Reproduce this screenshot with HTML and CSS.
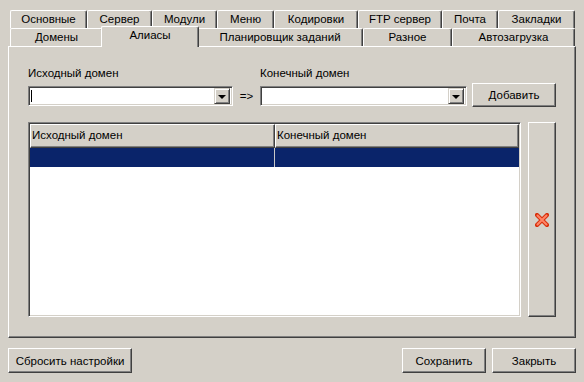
FILE: index.html
```html
<!DOCTYPE html>
<html lang="ru">
<head>
  <meta charset="UTF-8">
  <title>Настройки</title>
  <link rel="stylesheet" href="styles.css">
</head>
<body>
  <div class="window">
    <div class="tabs">
      <div class="tab-row back">
        <div class="tab">Основные</div>
        <div class="tab">Сервер</div>
        <div class="tab">Модули</div>
        <div class="tab">Меню</div>
        <div class="tab">Кодировки</div>
        <div class="tab">FTP сервер</div>
        <div class="tab">Почта</div>
        <div class="tab">Закладки</div>
      </div>
      <div class="tab-row front">
        <div class="tab">Домены</div>
        <div class="tab active">Алиасы</div>
        <div class="tab">Планировщик заданий</div>
        <div class="tab">Разное</div>
        <div class="tab">Автозагрузка</div>
      </div>
    </div>

    <div class="panel">
      <div class="domain-row">
        <div class="field source">
          <label>Исходный домен</label>
          <div class="combo">
            <span class="caret"></span>
            <span class="drop"><span class="arrow-down"></span></span>
          </div>
        </div>
        <span class="arrow">=&gt;</span>
        <div class="field target">
          <label>Конечный домен</label>
          <div class="combo">
            <span class="drop"><span class="arrow-down"></span></span>
          </div>
        </div>
        <button class="btn add">Добавить</button>
      </div>

      <div class="list-row">
        <div class="list">
          <div class="list-head">
            <div class="col">Исходный домен</div>
            <div class="col">Конечный домен</div>
          </div>
          <div class="list-item selected">
            <div class="cell"></div>
            <div class="cell"></div>
          </div>
        </div>
        <button class="btn delete" title="Удалить">
          <svg width="14" height="14" viewBox="0 0 14 14">
            <path d="M2 2 L12 12 M12 2 L2 12" stroke="#d8300c" stroke-width="4.2" stroke-linecap="round"/>
            <path d="M2.5 2.5 L11.5 11.5 M11.5 2.5 L2.5 11.5" stroke="#ff8466" stroke-width="2" stroke-linecap="round"/>
          </svg>
        </button>
      </div>
    </div>

    <div class="footer">
      <button class="btn reset">Сбросить настройки</button>
      <span class="spacer"></span>
      <button class="btn">Сохранить</button>
      <button class="btn">Закрыть</button>
    </div>
  </div>
</body>
</html>
```

FILE: styles.css
```css
body {
  margin: 0;
  background: #d4d0c8;
  font-family: 'Liberation Sans', Arial, sans-serif;
  font-size: 11.5px;
  color: #000;
}

.window {
  padding: 10px 8px 0 8px;
}

/* tabs */
.tab-row {
  display: grid;
  margin-left: 2px;
  width: 565px;
  height: 18px;
}
.tab-row.back {
  grid-template-columns: 77px 65px 65px 57px 84px 84px 56px 77px;
}
.tab-row.front {
  grid-template-columns: 93px 94px 166px 89px 123px;
}

.tab {
  border-top: 1px solid #fff;
  border-left: 1px solid #fff;
  border-right: 1px solid #404040;
  border-radius: 2px 2px 0 0;
  box-shadow: inset -1px 0 #808080;
  background: #d4d0c8;
  text-align: center;
  line-height: 17px;
  white-space: nowrap;
}
.tab.active {
  position: relative;
  z-index: 1;
  margin: -2px -2px -1px -2px;
  line-height: 16px;
}

/* main panel */
.panel {
  box-sizing: border-box;
  height: 292px;
  border: 1px solid;
  border-color: #fff #404040 #404040 #fff;
  box-shadow: inset -1px -1px #808080;
  padding: 20px 0 0 19px;
}

.domain-row {
  display: flex;
  align-items: flex-end;
}

.field label {
  display: block;
  line-height: 13px;
  margin-bottom: 6px;
}
.field.source .combo { width: 205px; }
.field.target .combo { width: 207px; }

.combo {
  box-sizing: border-box;
  height: 20px;
  background: #fff;
  border: 1px solid;
  border-color: #808080 #fff #fff #808080;
  box-shadow: inset 1px 1px #404040, inset -1px -1px #d4d0c8;
  display: flex;
  align-items: center;
  justify-content: flex-end;
  padding: 2px;
  position: relative;
}
.caret {
  position: absolute;
  left: 2px;
  top: 3px;
  width: 1px;
  height: 12px;
  background: #000;
}
.drop {
  box-sizing: border-box;
  width: 16px;
  height: 16px;
  background: #d4d0c8;
  border: 1px solid;
  border-color: #d4d0c8 #404040 #404040 #d4d0c8;
  box-shadow: inset 1px 1px #fff, inset -1px -1px #808080;
  display: flex;
  align-items: center;
  justify-content: center;
}
.arrow-down {
  width: 0;
  height: 0;
  border-left: 4px solid transparent;
  border-right: 4px solid transparent;
  border-top: 4px solid #000;
  margin-top: 1px;
}

.arrow {
  width: 27px;
  text-align: center;
  line-height: 20px;
}

.btn {
  box-sizing: border-box;
  font: inherit;
  color: #000;
  background: #d4d0c8;
  border: 1px solid;
  border-color: #fff #404040 #404040 #fff;
  box-shadow: inset -1px -1px #808080;
  padding: 0;
  height: 25px;
  width: 84px;
}
.btn.add {
  margin-left: 5px;
  height: 24px;
  margin-bottom: -1px;
}

/* list */
.list-row {
  display: flex;
  gap: 7px;
  margin-top: 16px;
}
.list {
  box-sizing: border-box;
  width: 493px;
  height: 195px;
  background: #fff;
  border: 1px solid;
  border-color: #808080 #fff #fff #808080;
  box-shadow: inset 1px 1px #404040, inset -1px -1px #d4d0c8;
  padding: 1px;
}
.list-head {
  display: grid;
  grid-template-columns: 245px 1fr;
  height: 24px;
}
.list-head .col {
  background: #d4d0c8;
  border-top: 1px solid #fff;
  border-left: 1px solid #fff;
  border-right: 1px solid #404040;
  border-bottom: 1px solid #404040;
  box-shadow: inset -1px -1px #808080;
  line-height: 20px;
  padding-left: 1px;
  white-space: nowrap;
}
.list-item {
  display: grid;
  grid-template-columns: 245px 1fr;
  height: 19px;
}
.list-item.selected {
  background: #0a246a;
}
.list-item .cell:first-child {
  border-right: 1px solid #c8c8c8;
}

.btn.delete {
  width: 28px;
  height: 195px;
  display: flex;
  align-items: center;
  justify-content: center;
}

/* footer */
.footer {
  display: flex;
  gap: 6px;
  margin-top: 10px;
}
.btn.reset {
  width: 124px;
}
.spacer {
  flex: 1;
}
```
